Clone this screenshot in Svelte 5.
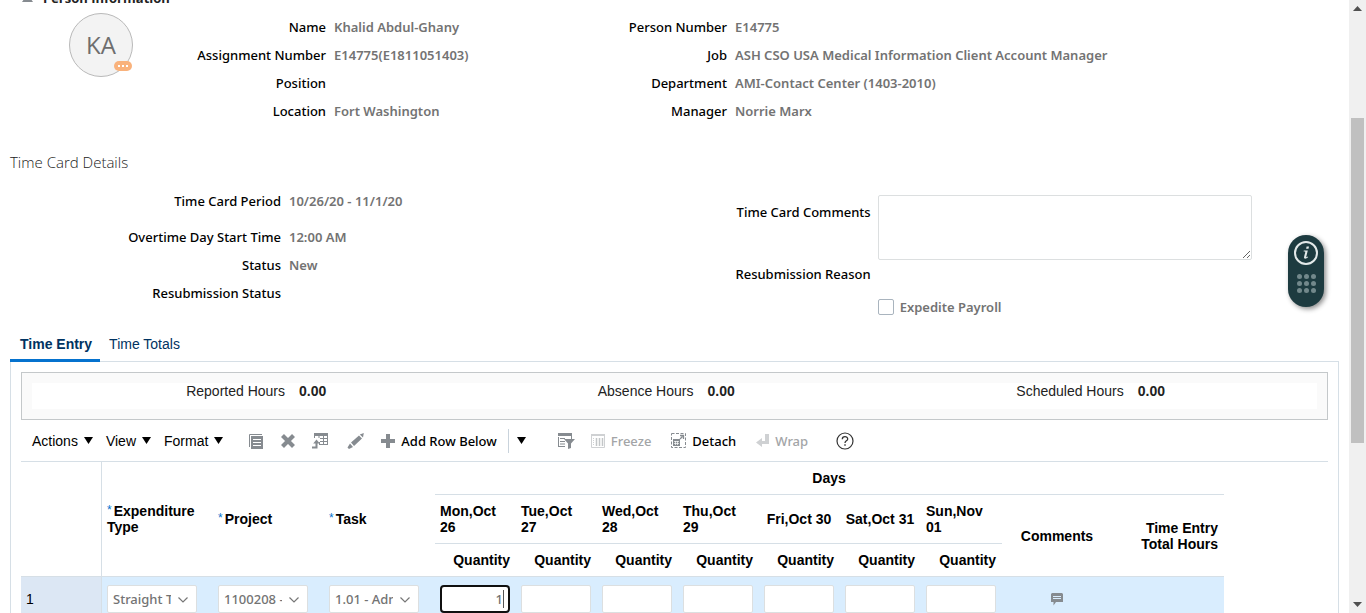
<script>
  const personLeft = [
    ['Name', 'Khalid Abdul-Ghany'],
    ['Assignment Number', 'E14775(E1811051403)'],
    ['Position', ''],
    ['Location', 'Fort Washington']
  ];
  const personRight = [
    ['Person Number', 'E14775'],
    ['Job', 'ASH CSO USA Medical Information Client Account Manager'],
    ['Department', 'AMI-Contact Center (1403-2010)'],
    ['Manager', 'Norrie Marx']
  ];
  const cardStatus = [
    ['Overtime Day Start Time', '12:00 AM'],
    ['Status', 'New'],
    ['Resubmission Status', '']
  ];
  const totals = [
    ['Reported Hours', '0.00'],
    ['Absence Hours', '0.00'],
    ['Scheduled Hours', '0.00']
  ];
  const menus = ['Actions', 'View', 'Format'];
  const required = ['Expenditure Type', 'Project', 'Task'];
  const choices = ['Straight Time', '1100208 -', '1.01 - Adm'];
  const days = ['Mon,Oct 26', 'Tue,Oct 27', 'Wed,Oct 28', 'Thu,Oct 29', 'Fri,Oct 30', 'Sat,Oct 31', 'Sun,Nov 01'];
  let hours = $state(['1', '', '', '', '', '', '']);
  let comments = $state('');
  let expedite = $state(false);
  const dots = [0, 1, 2, 3, 4, 5, 6, 7, 8];
</script>

{#snippet caret()}
  <svg width="9" height="7" viewBox="0 0 9 7" aria-hidden="true"><path d="M0 0h9L4.500 7z" fill="#000" /></svg>
{/snippet}

{#snippet pairs(rows)}
  <dl>
    {#each rows as [label, value]}
      <dt>{label}</dt>
      <dd>{value}</dd>
    {/each}
  </dl>
{/snippet}

<div class="window">
  <main>
    <section class="person">
      <h2>
        <svg width="11" height="8" viewBox="0 0 11 8" aria-hidden="true"><path d="M5.500 0L11 8H0z" fill="#868b90" /></svg>
        Person Information
      </h2>
      <div class="person-body">
        <div class="avatar">
          KA
          <span class="presence"><i></i><i></i><i></i></span>
        </div>
        {@render pairs(personLeft)}
        {@render pairs(personRight)}
      </div>
    </section>

    <section class="details">
      <h3>Time Card Details</h3>
      <div class="details-body">
        <div class="details-left">
          {@render pairs([['Time Card Period', '10/26/20 - 11/1/20']])}
          {@render pairs(cardStatus)}
        </div>
        <div class="form">
          <label for="comments">Time Card Comments</label>
          <textarea id="comments" bind:value={comments}></textarea>
          <span class="form-label">Resubmission Reason</span>
          <span></span>
          <label class="check"><input type="checkbox" bind:checked={expedite} />Expedite Payroll</label>
        </div>
      </div>
    </section>

    <div class="tabs" role="tablist">
      <button class="tab active" role="tab" aria-selected="true">Time Entry</button>
      <button class="tab" role="tab" aria-selected="false">Time Totals</button>
    </div>

    <section class="panel">
      <div class="totals">
        <div class="totals-inner">
          {#each totals as [label, value]}
            <div>{label}<b>{value}</b></div>
          {/each}
        </div>
      </div>

      <div class="toolbar">
        <div class="menus">
          {#each menus as menu}
            <button>{menu}{@render caret()}</button>
          {/each}
        </div>
        <div class="icons">
          <button aria-label="Duplicate">
            <svg width="16" height="16" viewBox="0 0 16 16"><path d="M1.500 14V1.500H14" fill="none" stroke="#868b90" /><path d="M3 3h12v13H3z" fill="#868b90" /><path d="M5 6.500h8M5 9.500h8M5 12.500h8" stroke="#fff" /></svg>
          </button>
          <button aria-label="Delete">
            <svg width="16" height="16" viewBox="0 0 16 16"><path d="M2.500 2.500l11 11M13.500 2.500l-11 11" stroke="#868b90" stroke-width="4.200" /></svg>
          </button>
          <button aria-label="Insert row">
            <svg width="16" height="16" viewBox="0 0 16 16"><path d="M2 0h14v12H7V9h1V5H2z" fill="#868b90" /><path d="M3 3h3.500v2H3zM7.500 3H11v2H7.500zM12 3h3v2h-3zM7.500 6H11v2H7.500zM12 6h3v2h-3zM8 9h3v2H8zM12 9h3v2h-3z" fill="#fff" /><path d="M0 14.500h4.500V9" fill="none" stroke="#868b90" stroke-width="2" /><path d="M1.200 10.500L4.500 6.500l3.300 4z" fill="#868b90" /></svg>
          </button>
          <button class="edit" aria-label="Edit">
            <svg width="18" height="16" viewBox="0 0 18 16"><path d="M4 9.500L12 2.500l3 3L7 13zM12.800 1.500L16.800 0 16 4.500zM3 10.500L6 14l-4 2-1.500-1.500z" fill="#868b90" /></svg>
          </button>
        </div>
        <button class="action add">
          <svg width="14" height="14" viewBox="0 0 14 14" aria-hidden="true"><path d="M5 0h4v5h5v4H9v5H5V9H0V5h5z" fill="#868b90" /></svg>
          Add Row Below
        </button>
        <button class="split" aria-label="More row actions">{@render caret()}</button>
        <button class="filter" aria-label="Query by example">
          <svg width="17" height="16" viewBox="0 0 17 16"><path d="M0 0h14v3H0zM0 4h1v10H0zM0 13h7v1H0zM2 5h5v1H2zM2 8h5v1H2zM2 10.500h5v1H2zM13 3h1v3h-1z" fill="#868b90" /><path d="M6 6h11l-4 4.500V15l-3 1v-5.500z" fill="#868b90" /></svg>
        </button>
        <button class="action freeze" disabled>
          <svg width="14" height="14" viewBox="0 0 14 14" aria-hidden="true"><path d="M.5.500h13v13H.5z" fill="none" stroke="#cfd1d3" /><path d="M0 0h14v2H0z" fill="#cfd1d3" /><path d="M2.500 4v8" stroke="#cfd1d3" stroke-dasharray="1 1" /><path d="M5.500 4v8M8.500 4v8M11.500 4v8" stroke="#c3c6c8" stroke-width="1.500" /></svg>
          Freeze
        </button>
        <button class="action detach">
          <svg width="15" height="15" viewBox="0 0 15 15" aria-hidden="true"><path d="M.5.500h14v14H.5z" fill="none" stroke="#868b90" stroke-dasharray="3 1.500" /><path d="M2 6h7v7H2z" fill="#868b90" /><path d="M3 8.500h5M3 10.500h5M4.500 8v4M6.500 8v4" stroke="#fff" stroke-width=".7" /><path d="M9 6l2.500-2.500M9 2.500h3.500V6" fill="none" stroke="#868b90" stroke-width="1.300" /></svg>
          Detach
        </button>
        <button class="action wrap" disabled>
          <svg width="13" height="13" viewBox="0 0 13 13" aria-hidden="true"><path d="M9 0h4v10H6v3L0 8.500 6 4v3h3z" fill="#cfd1d3" /></svg>
          Wrap
        </button>
        <button class="help" aria-label="Help">
          <svg width="18" height="18" viewBox="0 0 18 18"><circle cx="9" cy="9" r="8" fill="none" stroke="#333" stroke-width="1.200" /><path d="M6.300 7.200c0-3.400 5.400-3.400 5.400-.3 0 1.900-2.700 1.900-2.700 4" fill="none" stroke="#333" stroke-width="1.300" /><path d="M8.300 12.200h1.400v1.500H8.300z" fill="#333" /></svg>
        </button>
      </div>

      <table>
        <colgroup>
          <col class="c-num" />
          <col class="c-wide" span="3" />
          <col class="c-day" span="7" />
          <col class="c-wide" span="2" />
        </colgroup>
        <thead>
          <tr class="r-group">
            <th class="corner" rowspan="3"></th>
            {#each required as name}
              <th rowspan="3"><span class="star">*</span>{name}</th>
            {/each}
            <th class="center" colspan="9">Days</th>
          </tr>
          <tr class="r-days">
            {#each days as day}
              <th class="center"><span class="day">{day}</span></th>
            {/each}
            <th class="center" rowspan="2">Comments</th>
            <th class="right" rowspan="2">Time Entry Total Hours</th>
          </tr>
          <tr class="r-quantity">
            {#each days as day}
              <th class="right">Quantity</th>
            {/each}
          </tr>
        </thead>
        <tbody>
          <tr>
            <th class="corner">1</th>
            {#each choices as choice, i}
              <td>
                <div class="choice">
                  <select aria-label={required[i]}><option>{choice}</option></select>
                  <svg width="10" height="6" viewBox="0 0 10 6" aria-hidden="true"><path d="M.5.500L5 5 9.500.500" fill="none" stroke="#777" stroke-width="1.200" /></svg>
                </div>
              </td>
            {/each}
            {#each days as day, i}
              <td>
                <div class="quantity" class:editing={i === 0}>
                  <input type="text" aria-label={day} bind:value={hours[i]} />
                </div>
              </td>
            {/each}
            <td class="center">
              <button aria-label="Comments">
                <svg width="12" height="13" viewBox="0 0 12 13"><path d="M1 0h10l1 1v8H5l-2.500 3.500V9H0V1z" fill="#868b90" /><path d="M2 3.500h8M2 5.500h8" stroke="#d9edfe" /></svg>
              </button>
            </td>
            <td></td>
          </tr>
        </tbody>
      </table>
    </section>
  </main>

  <div class="scrollbar" aria-hidden="true">
    <svg width="9" height="5" viewBox="0 0 9 5"><path d="M4.500 0L9 5H0z" fill="#505050" /></svg>
    <div class="track"><div class="thumb"></div></div>
    <svg width="9" height="5" viewBox="0 0 9 5"><path d="M0 0h9L4.500 5z" fill="#505050" /></svg>
  </div>

  <button class="guide" aria-label="Guide">
    <svg width="24" height="24" viewBox="0 0 24 24"><circle cx="12" cy="12" r="11" fill="none" stroke="#e3e9e9" stroke-width="2" /><path d="M12.600 5.500h2.400l-.5 2.300h-2.400zM9.800 9.600h4l-1.500 6c-.2.900.5.700 1.500-.1l.4.600c-2.200 2.300-4.700 2-4.100-.3l1.200-4.800c.1-.6-.5-.6-1.700-.6z" fill="#e3e9e9" /></svg>
    <span class="dots">{#each dots as dot}<i></i>{/each}</span>
  </button>
</div>

<style>
  :global(body) {
    margin: 0;
    background: #fff;
  }
  .window {
    --semi: "Noto Sans", "Open Sans", sans-serif;
    display: flex;
    height: 100vh;
    overflow: hidden;
    color: #000;
    font: 14px/16px "Liberation Sans", Arial, sans-serif;
  }
  main {
    flex: 1;
    min-width: 0;
    padding: 0 10px;
    margin-top: -12px;
  }
  button {
    display: flex;
    align-items: center;
    padding: 0;
    border: 0;
    background: none;
    color: inherit;
    font: inherit;
  }
  h2, h3, dl, dd {
    margin: 0;
  }
  h2 {
    display: flex;
    align-items: center;
    gap: 10px;
    height: 20px;
    padding-left: 12px;
    margin-bottom: 5px;
    font: 700 13px/20px "Open Sans", sans-serif;
    color: #222;
  }
  .person-body {
    display: grid;
    grid-template-columns: 64px 401px 1fr;
    padding-left: 59px;
  }
  .avatar {
    position: relative;
    display: flex;
    align-items: center;
    justify-content: center;
    box-sizing: border-box;
    width: 64px;
    height: 64px;
    border: 1px solid #b9b9b9;
    border-radius: 50%;
    background: #f3f3f3;
    color: #6e6e6e;
    font: 24px/32px "Open Sans", sans-serif;
  }
  .presence {
    position: absolute;
    right: 0;
    bottom: 5px;
    display: flex;
    align-items: center;
    justify-content: center;
    gap: 2px;
    width: 18px;
    height: 10px;
    border-radius: 5px;
    background: #f9b27c;
  }
  .presence i {
    width: 2px;
    height: 2px;
    background: #fff;
  }
  dl {
    display: grid;
    grid-template-columns: 193px 1fr;
    column-gap: 8px;
    grid-auto-rows: 28px;
    align-content: start;
    font: 500 13px/28px var(--semi);
  }
  dt {
    text-align: right;
  }
  dd {
    color: #737373;
    font-weight: 600;
  }
  h3 {
    margin-top: 27px;
    font: 300 15px/20px "Open Sans", sans-serif;
    color: #222;
  }
  .details-body {
    display: flex;
    padding-top: 15px;
  }
  .details-left {
    display: flex;
    flex-direction: column;
    gap: 8px;
    width: 54%;
  }
  .details-left dl {
    grid-template-columns: 271px 1fr;
  }
  .form {
    display: grid;
    grid-template-columns: 143px 374px;
    grid-template-rows: 66px 28px 32px;
    column-gap: 7px;
    padding-top: 8px;
    font: 500 13px/20px var(--semi);
  }
  .form > label:first-child {
    padding-top: 7px;
    text-align: right;
  }
  .form-label {
    padding-top: 3px;
    text-align: right;
  }
  textarea {
    box-sizing: border-box;
    width: 100%;
    height: 65px;
    border: 1px solid #dcdfe0;
    border-radius: 2px;
    background: #fff;
    font: 13px/20px var(--semi);
  }
  .check {
    grid-column: 2;
    display: flex;
    align-items: center;
    gap: 6px;
    height: 36px;
    color: #737373;
    font-weight: 600;
  }
  .check input {
    appearance: none;
    box-sizing: border-box;
    width: 16px;
    height: 16px;
    margin: 0;
    border: 1px solid #a9b4be;
    border-radius: 2px;
    background: #fff;
  }
  .tabs {
    display: flex;
    position: relative;
    margin-top: 8px;
    color: #003362;
  }
  .tab {
    height: 33px;
    padding: 0 9px;
    border-bottom: 3px solid transparent;
  }
  .tab.active {
    padding: 0 8px 0 10px;
    border-bottom-color: #0572ce;
    font-weight: 700;
  }
  .panel {
    min-height: 300px;
    margin-top: -1px;
    padding: 10px;
    border: 1px solid #d6dfe6;
  }
  .totals {
    padding: 10px;
    border: 1px solid #c4c8ca;
    background: #fafafa;
  }
  .totals-inner {
    display: grid;
    grid-template-columns: 412fr 419fr 301fr;
    height: 26px;
    padding-left: 12%;
    background: #fff;
    color: #222;
  }
  .totals-inner b {
    margin-left: 14px;
  }
  .toolbar {
    display: flex;
    align-items: center;
    height: 41px;
    padding-left: 11px;
    border-bottom: 1px solid #d6dfe6;
  }
  .menus {
    display: flex;
    gap: 13px;
  }
  .menus button {
    gap: 6px;
  }
  .icons {
    display: flex;
    gap: 16px;
    margin-left: 25px;
  }
  .edit {
    margin-left: 3px;
  }
  .action {
    gap: 6px;
    font: 500 13px/20px var(--semi);
  }
  .action:disabled {
    color: #a3a5a7;
  }
  .add {
    margin-left: 16px;
  }
  .split {
    height: 24px;
    padding-left: 8px;
    margin-left: 11px;
    border-left: 1px solid #c9d3dc;
  }
  .filter {
    margin-left: 32px;
  }
  .freeze {
    margin-left: 16px;
  }
  .detach {
    margin-left: 20px;
  }
  .wrap {
    margin-left: 20px;
  }
  .help {
    margin-left: 28px;
  }
  table {
    width: 1203px;
    table-layout: fixed;
    border-spacing: 0;
  }
  .c-num {
    width: 81px;
  }
  .c-wide {
    width: 111px;
  }
  .c-day {
    width: 81px;
  }
  .r-group {
    height: 33px;
  }
  .r-days {
    height: 49px;
  }
  .r-quantity {
    height: 33px;
  }
  th {
    box-sizing: border-box;
    padding: 0 6px 0 5px;
    border-bottom: 1px solid #d6dfe6;
    text-align: left;
    vertical-align: middle;
  }
  .day {
    display: inline-block;
    text-align: left;
  }
  .corner {
    border-right: 1px solid #d6dfe6;
  }
  .star {
    color: #0572ce;
    font-size: 12px;
    font-weight: 400;
    vertical-align: 2px;
    line-height: 12px;
    margin-right: 2px;
  }
  .center {
    text-align: center;
  }
  .right {
    text-align: right;
  }
  tbody tr {
    height: 44px;
    background: #d9edfe;
  }
  tbody .corner {
    background: #dce7f4;
    font-weight: 400;
  }
  td {
    padding: 0 6px 0 5px;
  }
  td button {
    margin: 0 auto;
  }
  .choice {
    position: relative;
    width: 90px;
  }
  .choice svg {
    position: absolute;
    top: 12px;
    right: 9px;
  }
  select, .quantity input {
    display: block;
    box-sizing: border-box;
    width: 100%;
    height: 28px;
    border: 1px solid #dcdfe0;
    border-radius: 2px;
    background: #fff;
    color: #737373;
    font: 500 13px/20px var(--semi);
  }
  select {
    appearance: none;
    padding: 0 25px 0 5px;
    text-overflow: clip;
  }
  .quantity {
    position: relative;
  }
  .quantity input {
    padding: 0 5px;
    text-align: right;
  }
  .editing input {
    border: 2px solid #101010;
    border-radius: 4px;
  }
  .editing::after {
    content: "";
    position: absolute;
    top: 5px;
    right: 6px;
    width: 1px;
    height: 18px;
    background: #555;
  }
  .scrollbar {
    display: flex;
    flex-direction: column;
    align-items: center;
    gap: 5px;
    box-sizing: border-box;
    width: 17px;
    padding: 6px 0;
    background: #f0f0f0;
  }
  .track {
    flex: 1;
    width: 13px;
  }
  .thumb {
    height: 56%;
    margin-top: 102px;
    background: #c0c0c0;
  }
  .guide {
    position: fixed;
    top: 235px;
    right: 42px;
    flex-direction: column;
    gap: 9px;
    box-sizing: border-box;
    width: 36px;
    height: 72px;
    padding-top: 6px;
    border-radius: 18px;
    background: #1d3b40;
    box-shadow: 2px 2px 5px rgb(0 0 0 / 45%);
  }
  .dots {
    display: grid;
    grid-template-columns: repeat(3, 5px);
    gap: 2px;
  }
  .dots i {
    height: 5px;
    border-radius: 50%;
    background: #72888b;
  }
</style>
